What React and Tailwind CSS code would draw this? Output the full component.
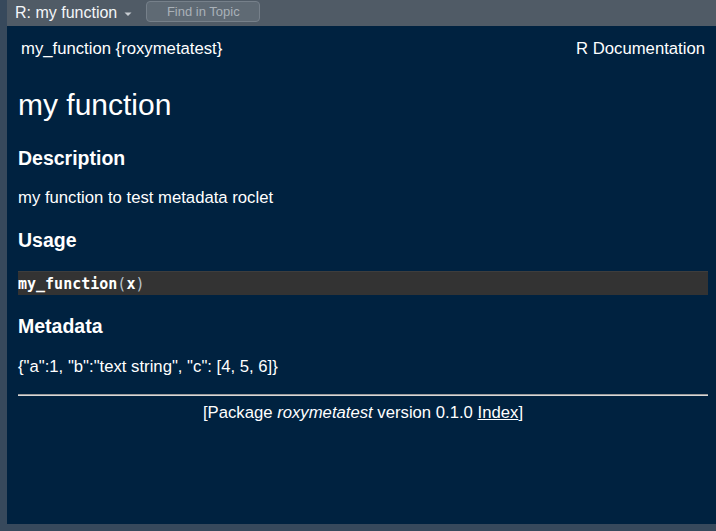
export default function App() {
  const sans = { fontFamily: '"Liberation Sans", Arial, sans-serif' };
  return (
    <div className="w-[716px] h-[531px] bg-[#37495c] pl-[7px] pb-[7px] flex flex-col overflow-hidden" style={sans}>
      <div className="h-[26px] bg-[#505b66] flex items-center shrink-0">
        <div className="flex items-center pl-[8px] text-[16px] text-[#f4f6f8] leading-none">
          <span>R: my function</span>
          <svg width="8" height="5" viewBox="0 0 8 5" className="ml-[7px] mt-[2px]">
            <path d="M0.5 0.5 L4 4 L7.5 0.5 Z" fill="#c8cdd2" />
          </svg>
        </div>
        <div className="ml-[14px] mt-[-4px] w-[114px] h-[21px] rounded-[4px] bg-[#5f6a74] border border-[#76808a] flex items-center justify-center text-[13px] text-[#a9b1b8] leading-none">
          Find in Topic
        </div>
      </div>
      <div className="flex-1 bg-[#002240] pl-[11px] pr-[8px] text-white">
        <div className="mt-[13px] h-[20px] flex justify-between items-center text-[16.7px] leading-[20px] pl-[3px] pr-[3px]">
          <span>my_function {"{roxymetatest}"}</span>
          <span>R Documentation</span>
        </div>
        <h1 className="mt-[28px] h-[36px] text-[30px] leading-[36px]">my function</h1>
        <h2 className="mt-[23px] h-[24px] text-[19.5px] leading-[24px] font-bold">Description</h2>
        <p className="mt-[18px] h-[20px] text-[16.7px] leading-[20px]">my function to test metadata roclet</p>
        <h2 className="mt-[20px] h-[24px] text-[19.5px] leading-[24px] font-bold">Usage</h2>
        <div className="mt-[19px] h-[24px] bg-[#333333] border-t border-[#3d3d3d] flex items-center text-[15px] leading-[24px]" style={{ fontFamily: '"DejaVu Sans Mono", monospace' }}>
          <span className="font-bold text-white">my_function</span>
          <span className="text-[#b8c2cc]">(</span>
          <span className="font-bold text-white">x</span>
          <span className="text-[#b8c2cc]">)</span>
        </div>
        <h2 className="mt-[19px] h-[24px] text-[19.5px] leading-[24px] font-bold">Metadata</h2>
        <p className="mt-[19px] h-[20px] text-[16.7px] leading-[20px]">{'{"a":1, "b":"text string", "c": [4, 5, 6]}'}</p>
        <div className="mt-[17px] h-[2px] bg-[#d8d8d8] border-t border-[#9a9a9a]"></div>
        <div className="mt-[7px] h-[20px] text-center text-[16.7px] leading-[20px]">
          [Package <i>roxymetatest</i> version 0.1.0 <span className="underline">Index</span>]
        </div>
      </div>
    </div>
  );
}
